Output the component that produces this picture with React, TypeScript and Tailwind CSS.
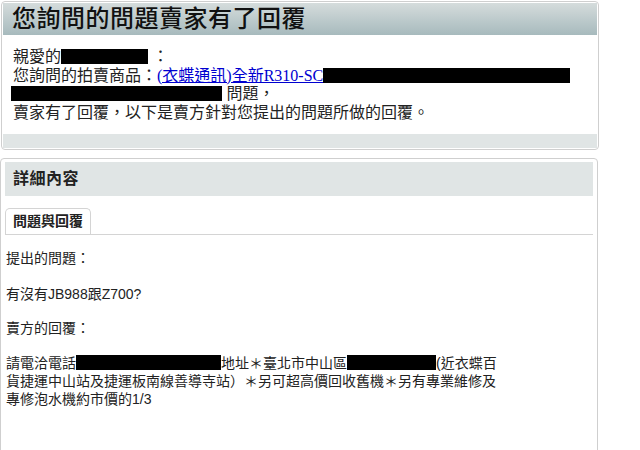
import React from 'react';

const font = "font-['Liberation_Sans','Noto_Sans_CJK_TC',sans-serif]";

const Redact: React.FC<{ w: number; className?: string }> = ({ w, className = '' }) => (
  <span className={`inline-block h-[15px] bg-black align-[-2px] ${className}`} style={{ width: w }} />
);

const App: React.FC = () => {
  return (
    <div className={`w-[640px] h-[450px] overflow-hidden bg-white ${font}`}>
      {/* notice panel */}
      <div className="ml-px mt-px w-[598px] border border-[#cfcfcf] rounded-[4px] p-px">
        <div className="h-[32px] bg-gradient-to-b from-[#d5dcdc] to-[#a7babd] pl-[9px] flex items-center">
          <h1 className="text-[24px] leading-none tracking-[0.5px] text-[#111] font-medium">您詢問的問題賣家有了回覆</h1>
        </div>
        <div className="pt-[13px] pb-[12px] pl-[10px] text-[16px] leading-[18.5px] text-[#222]">
          <div>
            親愛的<Redact w={87} />&nbsp;：
          </div>
          <div>
            您詢問的拍賣商品：
            <a href="#" className="text-[#0000d0] underline font-['Liberation_Serif','Noto_Sans_CJK_TC',serif]">
              (衣蝶通訊)全新R310-SC<Redact w={247} />
            </a>
          </div>
          <div className="-ml-[2px]">
            <a href="#" className="text-[#0000d0] underline">
              <Redact w={211} />
            </a>
            &nbsp;問題，
          </div>
          <div>賣家有了回覆，以下是賣方針對您提出的問題所做的回覆。</div>
        </div>
        <div className="h-[14px] bg-[#e0e5e5]" />
      </div>

      {/* detail panel */}
      <div className="mt-[8px] w-[598px] h-[300px] border border-[#cfcfcf] rounded-[4px] p-[4px] pt-[3px]">
        <div className="h-[34px] bg-[#e0e5e5] flex items-center pl-[8px]">
          <h2 className="text-[16px] font-bold text-[#222] tracking-[0.5px]">詳細內容</h2>
        </div>
        <div className="mt-[12px] flex border-b border-[#d4d4d4]">
          <div className="w-[86px] h-[26px] border border-b-0 border-[#d4d4d4] rounded-t-[5px] flex items-center justify-center text-[14px] font-bold text-[#222]">
            問題與回覆
          </div>
        </div>
        <div className="text-[14px] leading-[18px] text-[#222] pl-px">
          <p className="mt-[14px]">提出的問題：</p>
          <p className="mt-[18px]">有沒有JB988跟Z700?</p>
          <p className="mt-[16px]">賣方的回覆：</p>
          <p className="mt-[17px] w-[510px]">
            請電洽電話<Redact w={145} className="h-[13px]" />地址＊臺北市中山區<Redact w={89} className="h-[13px]" />(近衣蝶百
            <br />
            貨捷運中山站及捷運板南線善導寺站）＊另可超高價回收舊機＊另有專業維修及
            <br />
            專修泡水機約市價的1/3
          </p>
        </div>
      </div>
    </div>
  );
};

export default App;
